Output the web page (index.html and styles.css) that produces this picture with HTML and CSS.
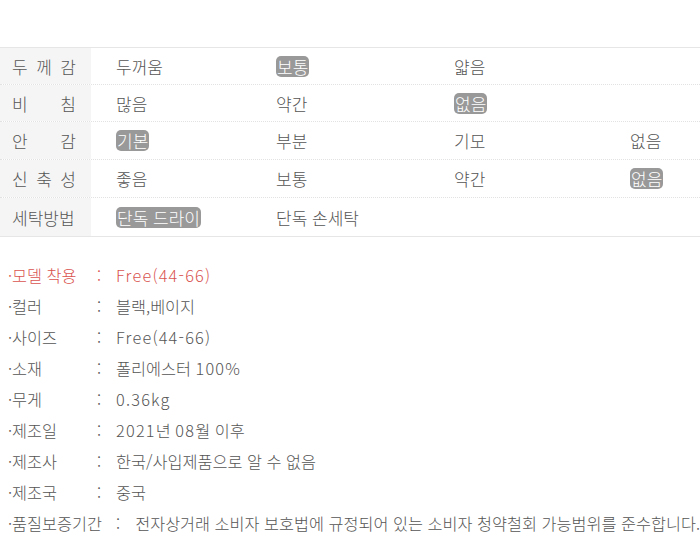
FILE: index.html
```html
<!DOCTYPE html>
<html lang="ko">
<head>
    <meta charset="UTF-8">
    <meta name="viewport" content="width=device-width, initial-scale=1.0">
    <title>상품 정보</title>
    <link rel="stylesheet" href="styles.css">
</head>
<body>
    <div class="spec-table">
        <div class="spec-row">
            <div class="spec-label"><span>두</span><span>께</span><span>감</span></div>
            <div class="spec-cell">두꺼움</div>
            <div class="spec-cell"><span class="pick">보통</span></div>
            <div class="spec-cell">얇음</div>
            <div class="spec-cell"></div>
        </div>
        <div class="spec-row">
            <div class="spec-label"><span>비</span><span>침</span></div>
            <div class="spec-cell">많음</div>
            <div class="spec-cell">약간</div>
            <div class="spec-cell"><span class="pick">없음</span></div>
            <div class="spec-cell"></div>
        </div>
        <div class="spec-row">
            <div class="spec-label"><span>안</span><span>감</span></div>
            <div class="spec-cell"><span class="pick">기본</span></div>
            <div class="spec-cell">부분</div>
            <div class="spec-cell">기모</div>
            <div class="spec-cell">없음</div>
        </div>
        <div class="spec-row">
            <div class="spec-label"><span>신</span><span>축</span><span>성</span></div>
            <div class="spec-cell">좋음</div>
            <div class="spec-cell">보통</div>
            <div class="spec-cell">약간</div>
            <div class="spec-cell"><span class="pick">없음</span></div>
        </div>
        <div class="spec-row">
            <div class="spec-label"><span>세탁방법</span></div>
            <div class="spec-cell"><span class="pick">단독 드라이</span></div>
            <div class="spec-cell">단독 손세탁</div>
            <div class="spec-cell"></div>
            <div class="spec-cell"></div>
        </div>
    </div>

    <ul class="info-list">
        <li class="highlight"><span class="info-key">·모델 착용</span><span class="info-sep">:</span><span class="en">Free(44-66)</span></li>
        <li><span class="info-key">·컬러</span><span class="info-sep">:</span><span>블랙,베이지</span></li>
        <li><span class="info-key">·사이즈</span><span class="info-sep">:</span><span class="en">Free(44-66)</span></li>
        <li><span class="info-key">·소재</span><span class="info-sep">:</span><span>폴리에스터 <span class="en">100%</span></span></li>
        <li><span class="info-key">·무게</span><span class="info-sep">:</span><span class="en">0.36kg</span></li>
        <li><span class="info-key">·제조일</span><span class="info-sep">:</span><span><span class="en">2021</span>년 <span class="en">08</span>월 이후</span></li>
        <li><span class="info-key">·제조사</span><span class="info-sep">:</span><span>한국/사입제품으로 알 수 없음</span></li>
        <li><span class="info-key">·제조국</span><span class="info-sep">:</span><span>중국</span></li>
        <li class="long"><span class="info-key">·품질보증기간</span><span class="info-sep">:</span><span>전자상거래 소비자 보호법에 규정되어 있는 소비자 청약철회 가능범위를 준수합니다.</span></li>
    </ul>
</body>
</html>
```

FILE: styles.css
```css
body {
    margin: 0;
    font-family: "Noto Sans CJK KR", "Noto Sans", sans-serif;
    font-weight: 300;
    color: #555;
    background-color: #fff;
}

/* 두께감 / 비침 / 안감 표 */
.spec-table {
    margin-top: 47px;
    border-top: 1px solid #e6e6e6;
    border-bottom: 1px solid #e6e6e6;
    font-size: 17px;
}

.spec-row {
    display: grid;
    grid-template-columns: 91px 160px 178px 176px 1fr;
    box-sizing: border-box;
    height: 37px;
    align-items: center;
    border-bottom: 1px dotted #e2e2e2;
}

.spec-row:nth-child(n+3) {
    height: 38px;
}

.spec-row:last-child {
    border-bottom: none;
}

.spec-label {
    height: 100%;
    display: flex;
    align-items: center;
    justify-content: space-between;
    padding: 0 15px 0 12px;
    background-color: #f5f5f5;
    color: #555;
}

.spec-cell {
    padding-left: 25px;
    color: #555;
}

.pick {
    display: inline-block;
    background-color: #999;
    color: #fff;
    border-radius: 5px;
    padding: 0 1px;
    line-height: 21px;
}

/* 상품 정보 목록 */
.info-list {
    list-style: none;
    margin: 23px 0 0 0;
    padding: 0 0 0 8px;
    font-size: 16.3px;
}

.info-list li {
    display: flex;
    height: 30.9px;
    align-items: center;
    white-space: nowrap;
    color: #555;
}

.info-list li.highlight {
    color: #d9534f;
}

.info-key {
    min-width: 81px;
}

.info-list li.long .info-key {
    padding-right: 7px;
}

.info-sep {
    margin: 0 15px 0 8px;
}

.en {
    letter-spacing: 1.2px;
}
```
